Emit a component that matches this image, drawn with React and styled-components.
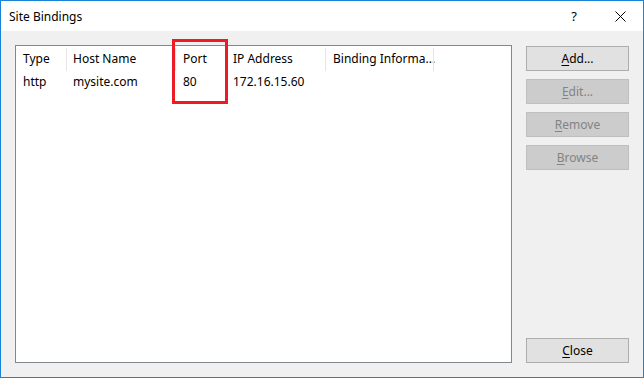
import React from "react";
import styled, { createGlobalStyle } from "styled-components";

const Global = createGlobalStyle`
  html, body { margin: 0; padding: 0; background: #ffffff; }
  body { font-family: "Noto Sans", "Segoe UI", sans-serif; font-size: 12px; color: #000; }
`;

const Window = styled.div`
  position: relative;
  width: 644px;
  height: 378px;
  box-sizing: border-box;
  border: 1px solid #1883d7;
  display: flex;
  flex-direction: column;
  background: #f0f0f0;
`;

const TitleBar = styled.div`
  height: 30px;
  background: #ffffff;
  display: flex;
  align-items: center;
  padding-left: 8px;
`;

const Title = styled.div`
  flex: 1;
  font-size: 12px;
`;

const TitleButton = styled.div`
  width: ${(p) => p.$w}px;
  height: 30px;
  display: flex;
  align-items: center;
  justify-content: center;
  font-size: 13px;
`;

const Body = styled.div`
  flex: 1;
  display: flex;
  gap: 14px;
  padding: 14px;
`;

const ListBox = styled.div`
  flex: 1;
  background: #ffffff;
  border: 1px solid #828790;
`;

const Grid = styled.div`
  display: grid;
  grid-template-columns: 51px 109px 50px 100px 108px;
`;

const HeadCell = styled.div`
  position: relative;
  height: 25px;
  display: flex;
  align-items: center;
  padding-left: ${(p) => p.$pl}px;
  white-space: nowrap;
  &::after {
    content: "";
    position: absolute;
    right: 0;
    top: 2px;
    bottom: 0;
    width: 1px;
    background: #e5e5e5;
  }
`;

const Cell = styled.div`
  height: 20px;
  display: flex;
  align-items: center;
  padding-left: ${(p) => p.$pl}px;
  white-space: nowrap;
`;

const Side = styled.div`
  width: 103px;
  display: flex;
  flex-direction: column;
  gap: 8px;
  padding-top: 1px;
`;

const Button = styled.div`
  height: 25px;
  box-sizing: border-box;
  border: 1px solid ${(p) => (p.$disabled ? "#bfbfbf" : "#adadad")};
  background: ${(p) => (p.$disabled ? "#cccccc" : "#e1e1e1")};
  color: ${(p) => (p.$disabled ? "#838383" : "#000000")};
  display: flex;
  align-items: center;
  justify-content: center;
  font-size: 12px;
  margin-top: ${(p) => (p.$bottom ? "auto" : "0")};
  u { text-decoration: underline; text-underline-offset: 2px; }
`;

const Highlight = styled.div`
  position: absolute;
  left: 171px;
  top: 38px;
  width: 56px;
  height: 65px;
  box-sizing: border-box;
  border: 3px solid #ed1c24;
  pointer-events: none;
`;

const cols = [
  { h: "Type", v: "http", pl: 7 },
  { h: "Host Name", v: "mysite.com", pl: 6 },
  { h: "Port", v: "80", pl: 7 },
  { h: "IP Address", v: "172.16.15.60", pl: 7 },
  { h: "Binding Informa...", v: "", pl: 7 },
];

export default function App() {
  return (
    <>
      <Global />
      <Window>
        <TitleBar>
          <Title>Site Bindings</Title>
          <TitleButton $w={46}>?</TitleButton>
          <TitleButton $w={46}>
            <svg width="11" height="11" viewBox="0 0 11 11">
              <path d="M0.5 0.5 L10.5 10.5 M10.5 0.5 L0.5 10.5" stroke="#000" strokeWidth="1" />
            </svg>
          </TitleButton>
        </TitleBar>
        <Body>
          <ListBox>
            <Grid>
              {cols.map((c) => (
                <HeadCell key={c.h} $pl={c.pl}>{c.h}</HeadCell>
              ))}
              {cols.map((c) => (
                <Cell key={c.h + "v"} $pl={c.pl}>{c.v}</Cell>
              ))}
            </Grid>
          </ListBox>
          <Side>
            <Button><span><u>A</u>dd...</span></Button>
            <Button $disabled><span><u>E</u>dit...</span></Button>
            <Button $disabled><span><u>R</u>emove</span></Button>
            <Button $disabled><span><u>B</u>rowse</span></Button>
            <Button $bottom><span><u>C</u>lose</span></Button>
          </Side>
        </Body>
        <Highlight />
      </Window>
    </>
  );
}
